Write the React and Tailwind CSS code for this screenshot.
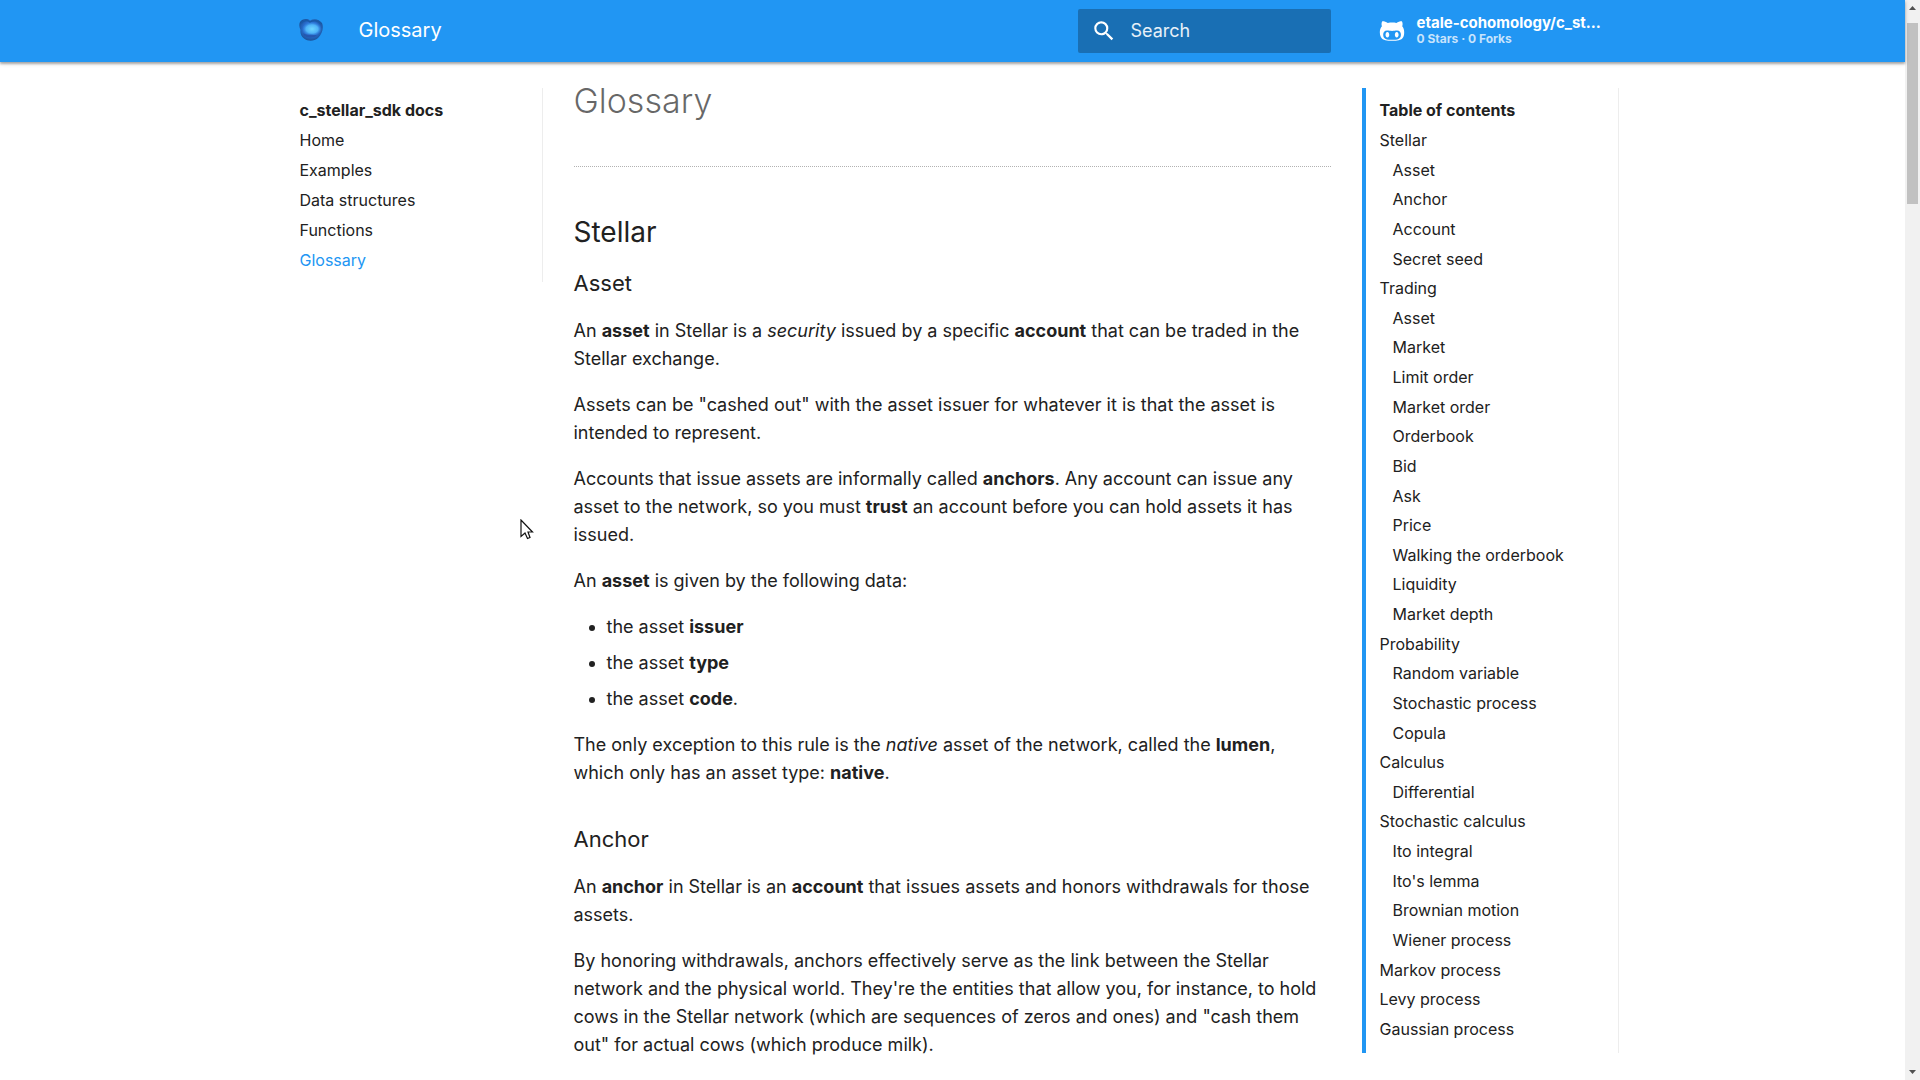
import React from "react";
import { FaGithubAlt } from "react-icons/fa";
import { MdSearch } from "react-icons/md";

const NAV = ["Home", "Examples", "Data structures", "Functions", "Glossary"];

const TOC = [
  ["Stellar", ["Asset", "Anchor", "Account", "Secret seed"]],
  [
    "Trading",
    [
      "Asset",
      "Market",
      "Limit order",
      "Market order",
      "Orderbook",
      "Bid",
      "Ask",
      "Price",
      "Walking the orderbook",
      "Liquidity",
      "Market depth",
    ],
  ],
  ["Probability", ["Random variable", "Stochastic process", "Copula"]],
  ["Calculus", ["Differential"]],
  ["Stochastic calculus", ["Ito integral", "Ito's lemma", "Brownian motion", "Wiener process"]],
  ["Markov process", []],
  ["Levy process", []],
  ["Gaussian process", []],
];

const TOC_ROWS = TOC.flatMap(([title, children]) => [
  { label: title, nested: false },
  ...children.map((label) => ({ label, nested: true })),
]);

function Logo() {
  return (
    <svg viewBox="0 0 24 22" className="h-[22px] w-6" aria-hidden="true">
      <defs>
        <radialGradient id="body" cx="0.5" cy="0.45" r="0.6">
          <stop offset="0" stopColor="#3aa0f0" />
          <stop offset="0.55" stopColor="#2a6fd0" />
          <stop offset="1" stopColor="#174a8c" />
        </radialGradient>
        <radialGradient id="glow">
          <stop offset="0" stopColor="#6fd6ff" />
          <stop offset="0.6" stopColor="#4fb4f8" />
          <stop offset="1" stopColor="#2f7fe0" stopOpacity="0" />
        </radialGradient>
      </defs>
      <path
        d="M1 3C3 0 8 -1 11 1.500C15 -1 20 0 23 4C25 9 23 15 19 19C15 22.500 9 22.500 5 19.500C2 17 1 14 1.500 11C0 8 0 5 1 3Z"
        fill="url(#body)"
      />
      <path d="M2 4C5 1 9 1 11 3C14 1 19 1 22 5" fill="none" stroke="#1a5aa8" strokeWidth="1.500" />
      <ellipse cx="13" cy="10" rx="10" ry="7" fill="url(#glow)" />
      <path d="M4 14C8 17 14 15 18 16.500C15 19 8 19 5 16.500" fill="#2452a8" opacity="0.75" />
    </svg>
  );
}

function Header() {
  return (
    <header className="relative z-10 h-[62px] shrink-0 bg-[#2196f3] text-white shadow-[0_2px_2px_rgba(0,0,0,0.25),0_1px_5px_rgba(0,0,0,0.2)]">
      <div className="mx-auto flex h-full max-w-[1342px] items-center pl-[17px]">
        <a href="#home" aria-label="c_stellar_sdk docs" className="mb-0.5 w-15">
          <Logo />
        </a>
        <span className="flex-1 pb-0.5 text-xl">Glossary</span>
        <label className="flex h-11 w-[253px] items-center rounded-xs bg-[#196fb4] pl-[13px]">
          <MdSearch className="size-[26px]" />
          <span className="sr-only">Search</span>
          <input
            type="text"
            placeholder="Search"
            className="ml-3.5 w-40 bg-transparent text-lg text-white outline-none placeholder:text-white/90"
          />
        </label>
        <a href="#repo" className="ml-12 flex w-[245px] items-center font-bold">
          <FaGithubAlt className="size-[26px]" />
          <span className="ml-3 whitespace-nowrap">
            <span className="block text-[15px] leading-4">etale-cohomology/c_st…</span>
            <span className="block text-xs leading-4 text-white/75">0 Stars · 0 Forks</span>
          </span>
        </a>
      </div>
    </header>
  );
}

function SiteNav() {
  return (
    <nav aria-label="Site" className="h-[194px] w-[261px] border-r border-black/7 pt-3 pl-[18px] text-base">
      <p className="font-bold leading-5">c_stellar_sdk docs</p>
      <ul>
        {NAV.map((label) => (
          <li key={label} className="mt-2.5 leading-5">
            <a href="#nav" className={label === "Glossary" ? "text-[#2196f3]" : ""}>
              {label}
            </a>
          </li>
        ))}
      </ul>
    </nav>
  );
}

function Toc() {
  return (
    <nav
      aria-label="Table of contents"
      className="flex h-[calc(100vh-115px)] w-[257px] flex-col border-r border-l-4 border-r-black/7 border-l-[#2196f3] pt-3 pb-3.5 pl-3.5 text-base"
    >
      <p className="font-bold leading-5">Table of contents</p>
      <ul className="mt-2.5 flex flex-1 flex-col justify-between">
        {TOC_ROWS.map(({ label, nested }, i) => (
          <li key={i} className={nested ? "pl-[13px] leading-5" : "leading-5"}>
            <a href="#section">{label}</a>
          </li>
        ))}
      </ul>
    </nav>
  );
}

function P({ children }) {
  return <p className="mt-[18px]">{children}</p>;
}

function Article() {
  return (
    <article className="w-[757px] text-lg leading-7">
      <h1 className="text-[34px] font-light leading-10 text-black/60">Glossary</h1>
      <hr className="mt-[45px] border-t border-dotted border-black/30" />
      <h2 className="mt-[47px] text-[28px] leading-9">Stellar</h2>
      <h3 className="mt-[17px] text-[22px] leading-8">Asset</h3>
      <P>
        An <b>asset</b> in Stellar is a <i>security</i> issued by a specific <b>account</b> that can be traded in the
        Stellar exchange.
      </P>
      <P>
        Assets can be "cashed out" with the asset issuer for whatever it is that the asset is intended to represent.
      </P>
      <P>
        Accounts that issue assets are informally called <b>anchors</b>. Any account can issue any asset to the
        network, so you must <b>trust</b> an account before you can hold assets it has issued.
      </P>
      <P>
        An <b>asset</b> is given by the following data:
      </P>
      <ul className="mt-[18px] ml-[33px] list-disc space-y-2">
        <li>
          the asset <b>issuer</b>
        </li>
        <li>
          the asset <b>type</b>
        </li>
        <li>
          the asset <b>code</b>.
        </li>
      </ul>
      <P>
        The only exception to this rule is the <i>native</i> asset of the network, called the <b>lumen</b>, which only
        has an asset type: <b>native</b>.
      </P>
      <h3 className="mt-9 text-[22px] leading-8">Anchor</h3>
      <P>
        An <b>anchor</b> in Stellar is an <b>account</b> that issues assets and honors withdrawals for those assets.
      </P>
      <P>
        By honoring withdrawals, anchors effectively serve as the link between the Stellar network and the physical
        world. They're the entities that allow you, for instance, to hold cows in the Stellar network (which are
        sequences of zeros and ones) and "cash them out" for actual cows (which produce milk).
      </P>
    </article>
  );
}

function Scrollbar() {
  return (
    <div className="flex w-[15px] shrink-0 flex-col items-center bg-[#f1f1f1] py-1.5" aria-hidden="true">
      <svg viewBox="0 0 7 4" className="h-1 w-[7px]" fill="#505050">
        <path d="M3.500 0L7 4H0Z" />
      </svg>
      <div className="mt-[13px] h-[181px] w-[11px] bg-[#c1c1c1]" />
      <svg viewBox="0 0 7 4" className="mt-auto h-1 w-[7px]" fill="#505050">
        <path d="M0 0H7L3.500 4Z" />
      </svg>
    </div>
  );
}

function Pointer() {
  return (
    <svg viewBox="0 0 14 21" className="absolute top-[519px] left-[520px] z-20 h-[21px] w-3.5" aria-hidden="true">
      <path
        d="M1 1V17.500L5 14L7.500 19.500L10 18.500L8 13H12.500Z"
        fill="#fff"
        stroke="#111"
        strokeWidth="1.200"
      />
    </svg>
  );
}

export default function App() {
  return (
    <div className="relative flex h-screen overflow-hidden bg-white font-['Inter',sans-serif] text-[#212121]">
      <div className="flex min-w-0 flex-1 flex-col">
        <Header />
        <div className="mx-auto flex min-h-0 w-full max-w-[1342px] flex-1 items-start">
          <div className="pt-[26px]">
            <SiteNav />
          </div>
          <main className="ml-[31px] flex-1 pt-[19px]">
            <Article />
          </main>
          <div className="mr-[5px] pt-[26px]">
            <Toc />
          </div>
        </div>
      </div>
      <Scrollbar />
      <Pointer />
    </div>
  );
}
